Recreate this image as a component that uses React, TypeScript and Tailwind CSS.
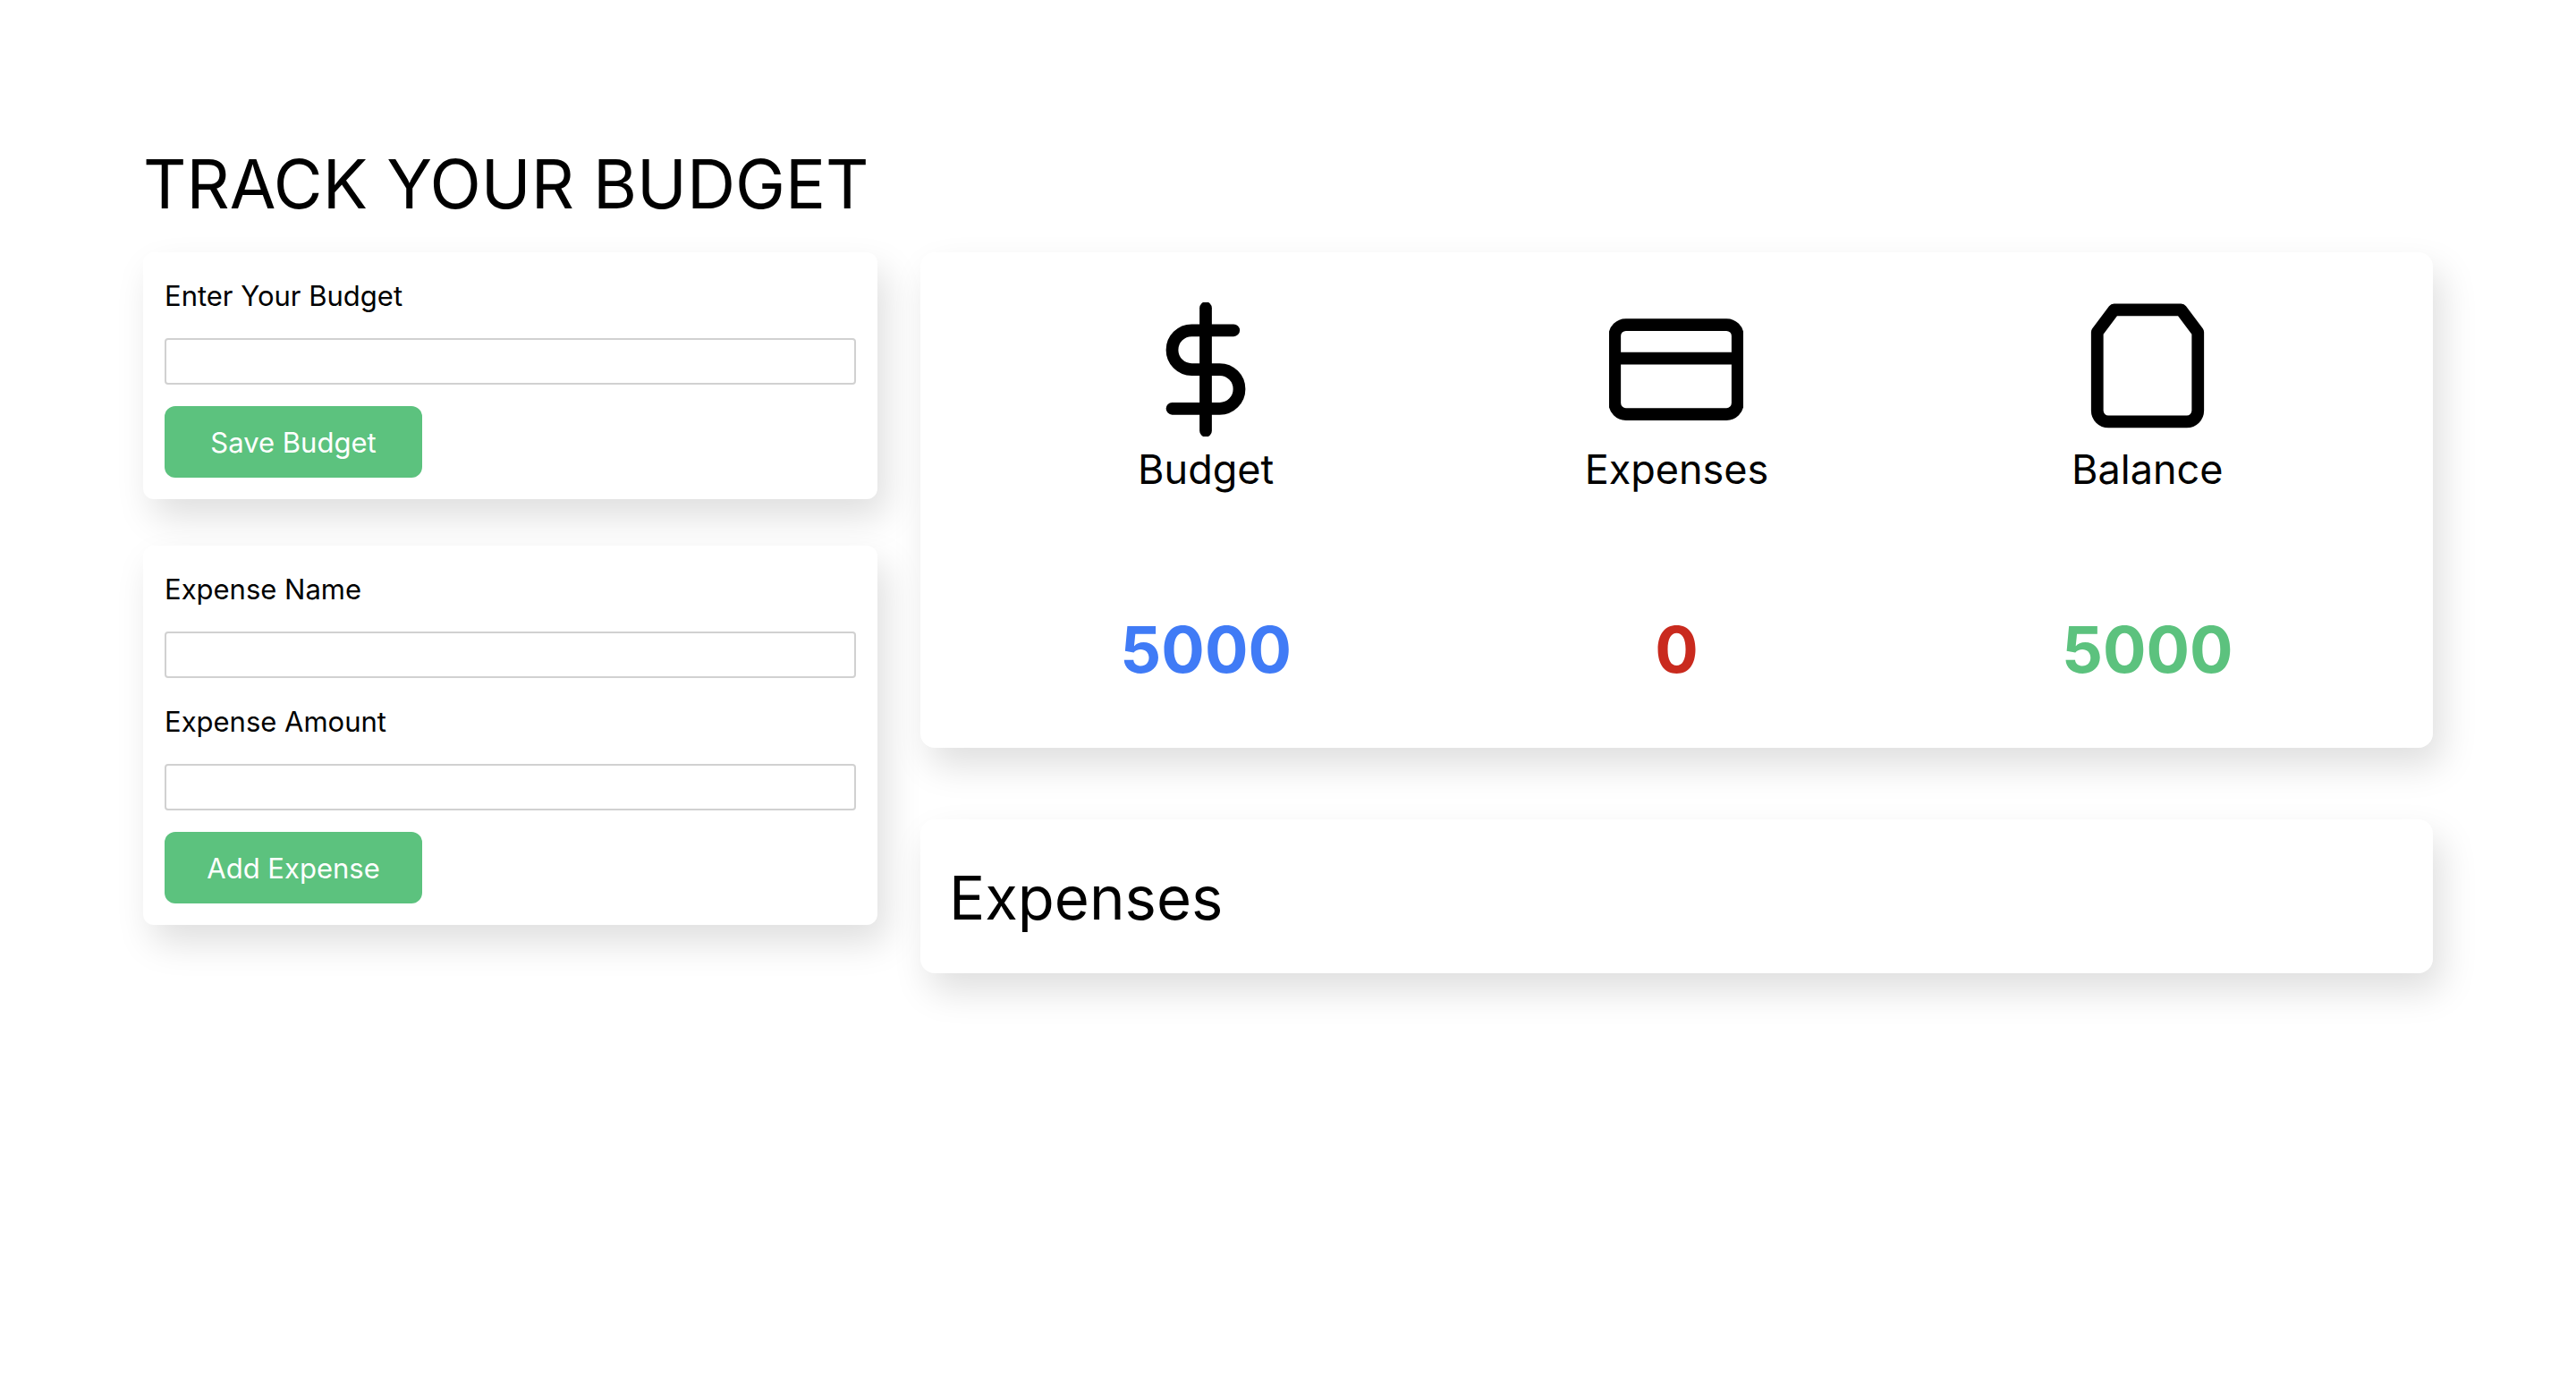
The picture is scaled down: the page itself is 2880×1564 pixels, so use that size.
import { ReactNode } from "react";

const SHADOW = "shadow-[10px_20px_40px_rgba(0,0,0,0.13)]";

function Icon({ children }: { children: ReactNode }) {
  return (
    <svg
      viewBox="0 0 24 24"
      className="h-[150px] w-[150px] overflow-hidden"
      fill="none"
      stroke="currentColor"
      strokeWidth="2.2"
      strokeLinecap="round"
      strokeLinejoin="round"
      aria-hidden="true"
    >
      {children}
    </svg>
  );
}

function Field({ id, label }: { id: string; label: string }) {
  return (
    <div className="flex flex-col gap-[22px]">
      <label htmlFor={id} className="text-[31px] leading-[50px]">
        {label}
      </label>
      <input
        id={id}
        type="text"
        className="h-13 w-full rounded-sm border-2 border-[#d1d1d1] bg-white px-2 text-[31px]"
      />
    </div>
  );
}

function FormCard({ action, children }: { action: string; children: ReactNode }) {
  return (
    <form className={`flex flex-col gap-6 rounded-xl bg-white p-6 ${SHADOW}`}>
      {children}
      <button
        type="button"
        className="h-20 w-72 rounded-xl bg-[#5cc27e] pt-0.5 text-[31px] text-white"
      >
        {action}
      </button>
    </form>
  );
}

function Stat({
  label,
  value,
  color,
  children,
}: {
  label: string;
  value: number;
  color: string;
  children: ReactNode;
}) {
  return (
    <div className="flex flex-col items-center">
      <Icon>{children}</Icon>
      <h2 className="text-[45px] leading-[74px]">{label}</h2>
      <p className={`mt-27 text-[72px] leading-[112px] font-bold ${color}`}>{value}</p>
    </div>
  );
}

export default function App() {
  return (
    <main className="min-h-screen bg-white px-40 pt-[146px] font-[Inter,sans-serif] text-black">
      <h1 className="text-[75px] leading-[120px]">TRACK YOUR BUDGET</h1>
      <div className="mt-4 flex items-start gap-12">
        <div className="flex flex-[821] flex-col gap-13">
          <FormCard action="Save Budget">
            <Field id="budget" label="Enter Your Budget" />
          </FormCard>
          <FormCard action="Add Expense">
            <Field id="expense-name" label="Expense Name" />
            <Field id="expense-amount" label="Expense Amount" />
          </FormCard>
        </div>
        <div className="flex flex-[1691] flex-col gap-20">
          <section className={`grid grid-cols-3 rounded-2xl bg-white px-14 pt-14 pb-[54px] ${SHADOW}`}>
            <Stat label="Budget" value={5000} color="text-[#407bf6]">
              <path d="M12 1v22" />
              <path d="M17 5H9.5a3.5 3.5 0 0 0 0 7h5a3.5 3.5 0 0 1 0 7H6" />
            </Stat>
            <Stat label="Expenses" value={0} color="text-[#c92a1e]">
              <rect x="1" y="4" width="22" height="16" rx="2" />
              <path d="M1 10h22" />
            </Stat>
            <Stat label="Balance" value={5000} color="text-[#5cc27e]">
              <path d="M6 1.35 3 5.35v14a2 2 0 0 0 2 2h14a2 2 0 0 0 2-2v-14l-3-4z" />
            </Stat>
          </section>
          <section className={`rounded-2xl bg-white px-8 pt-[34px] pb-[30px] ${SHADOW}`}>
            <h2 className="text-[67px] leading-[108px]">Expenses</h2>
          </section>
        </div>
      </div>
    </main>
  );
}
